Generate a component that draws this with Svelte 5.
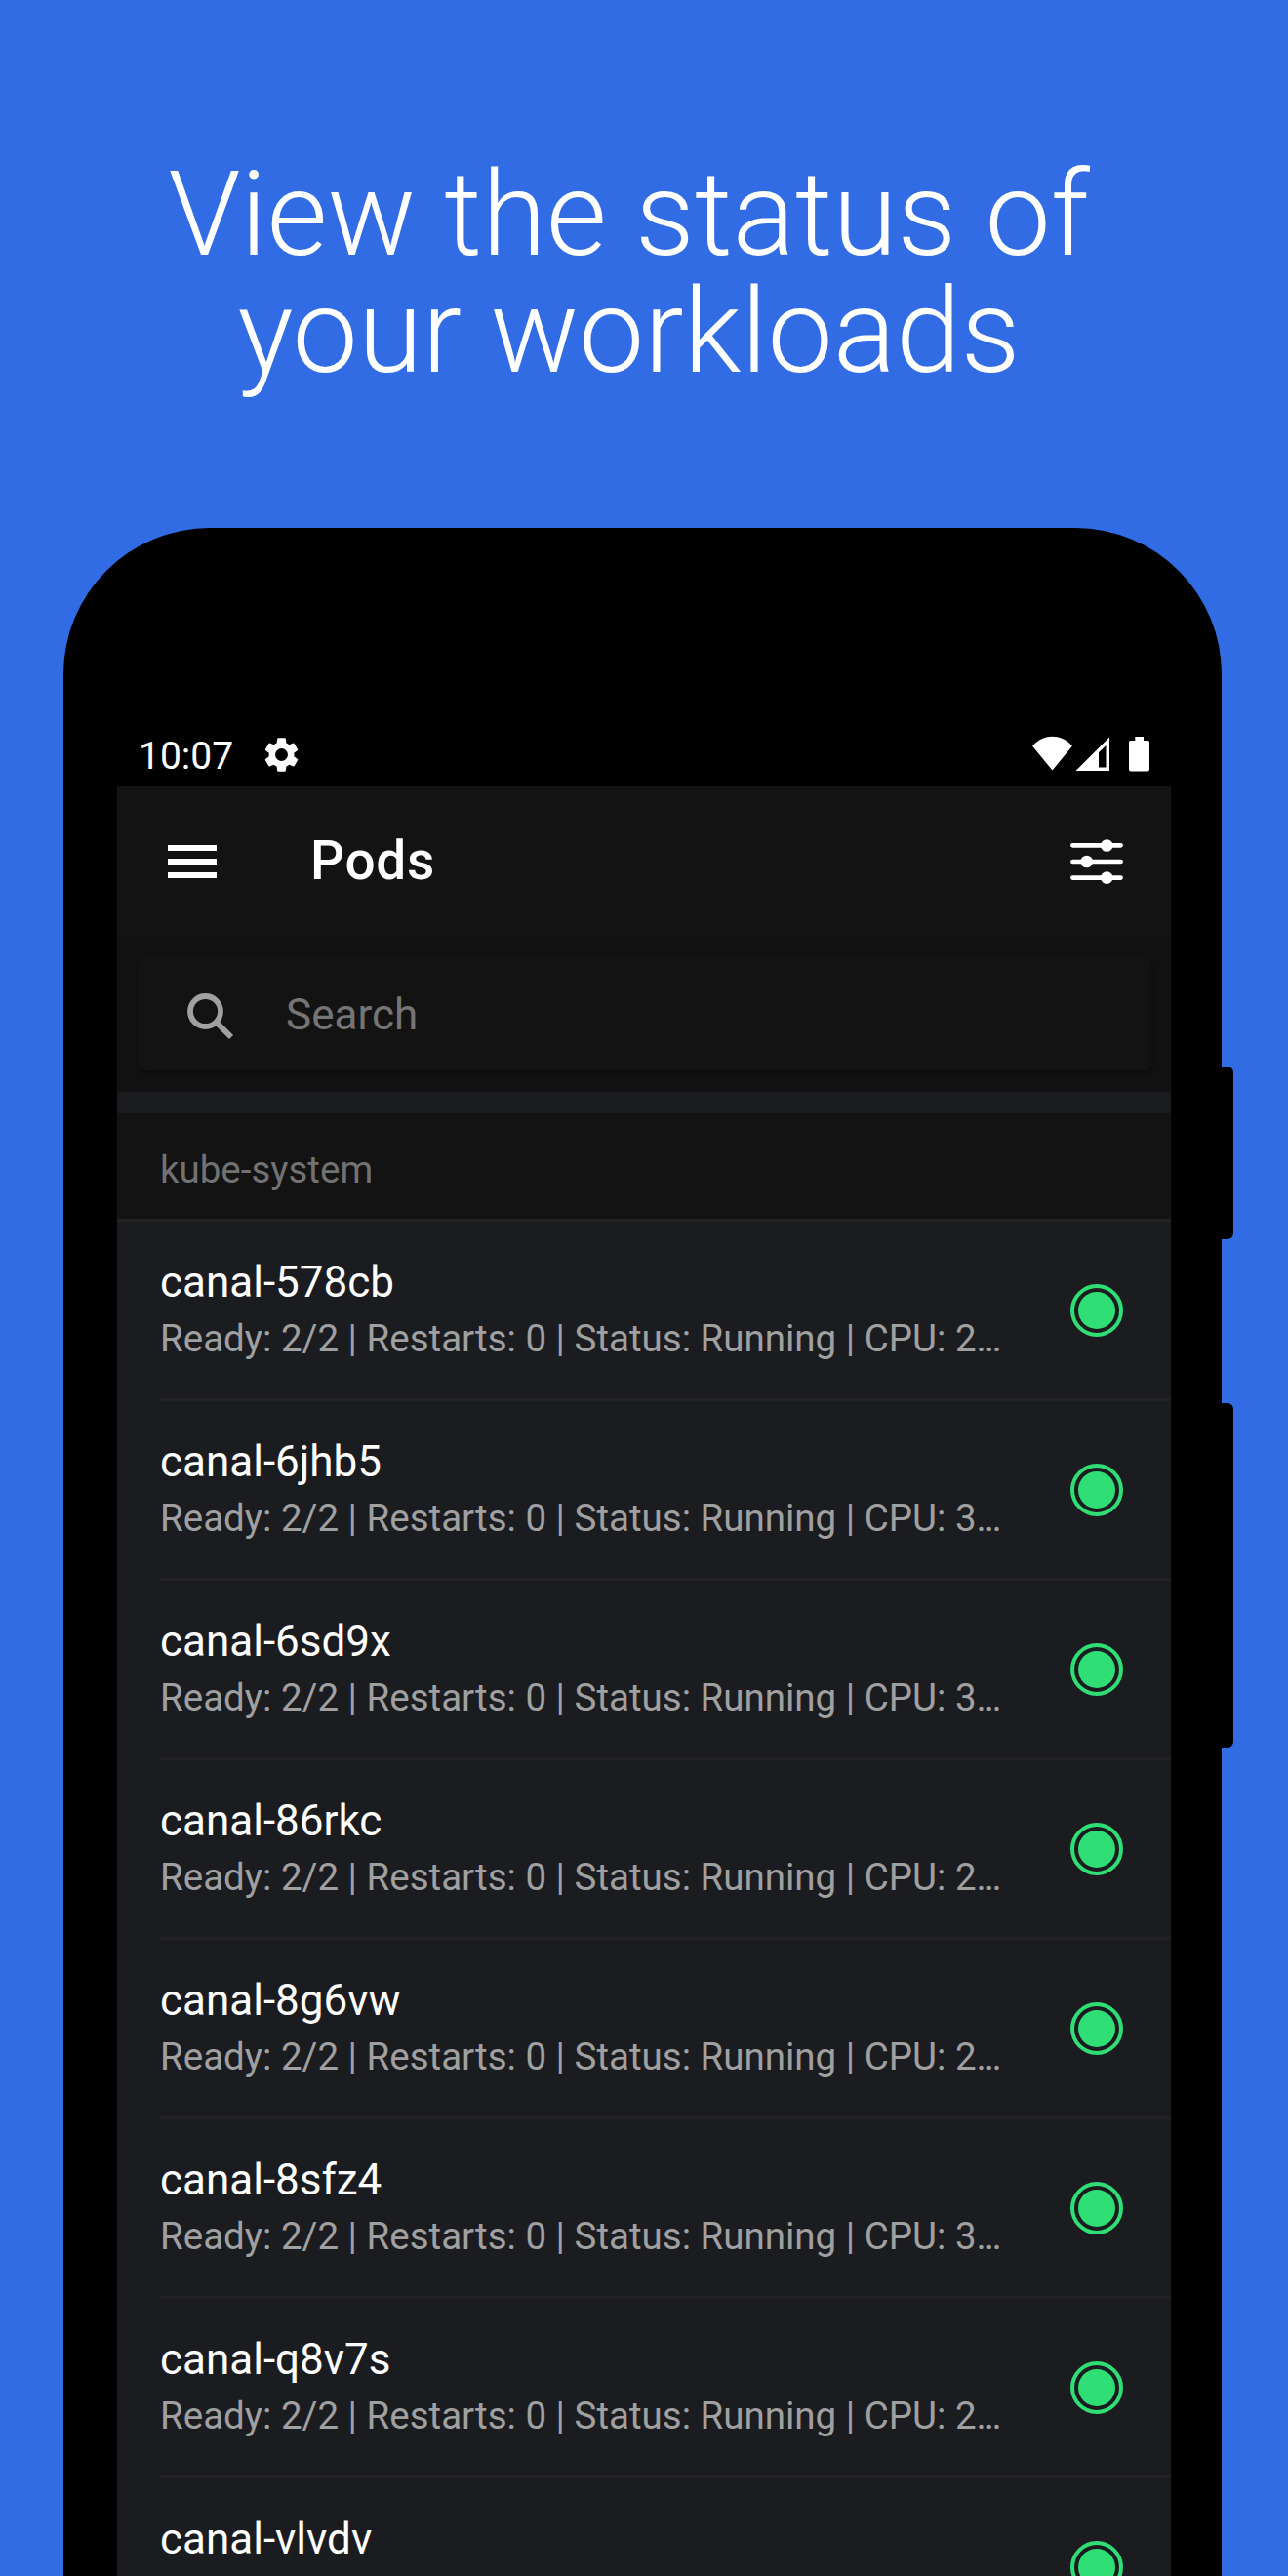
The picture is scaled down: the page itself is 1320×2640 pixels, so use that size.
<script>
  const pods = [
    { name: 'canal-578cb', cpu: 2 },
    { name: 'canal-6jhb5', cpu: 3 },
    { name: 'canal-6sd9x', cpu: 3 },
    { name: 'canal-86rkc', cpu: 2 },
    { name: 'canal-8g6vw', cpu: 2 },
    { name: 'canal-8sfz4', cpu: 3 },
    { name: 'canal-q8v7s', cpu: 2 },
    { name: 'canal-vlvdv', cpu: 2 }
  ];
</script>

<div class="page">
  <h1>View the status of<br />your workloads</h1>

  <div class="phone">
    <span class="key power"></span>
    <span class="key volume"></span>

    <div class="status">
      <span class="time">10:07</span>
      <svg class="gear" viewBox="0 0 24 24" width="43" height="43">
        <path fill="#fff" d="M19.14 12.94c.04-.3.06-.61.06-.94 0-.32-.02-.64-.07-.94l2.03-1.58a.49.49 0 0 0 .12-.61l-1.92-3.32a.49.49 0 0 0-.59-.22l-2.39.96a7 7 0 0 0-1.62-.94l-.36-2.54a.48.48 0 0 0-.48-.41h-3.84a.47.47 0 0 0-.47.41l-.36 2.54c-.59.24-1.13.57-1.62.94l-2.39-.96a.48.48 0 0 0-.59.22L2.74 8.87a.47.47 0 0 0 .12.61l2.03 1.58c-.05.3-.09.63-.09.94s.02.64.07.94l-2.03 1.58a.49.49 0 0 0-.12.61l1.92 3.32c.12.22.37.29.59.22l2.39-.96c.5.38 1.03.7 1.62.94l.36 2.54c.05.24.24.41.48.41h3.84c.24 0 .44-.17.47-.41l.36-2.54a7 7 0 0 0 1.62-.94l2.39.96c.22.08.47 0 .59-.22l1.92-3.32a.47.47 0 0 0-.12-.61zM12 15.6a3.6 3.6 0 1 1 0-7.2 3.6 3.6 0 0 1 0 7.2z" />
      </svg>
      <svg class="signals" viewBox="0 0 122 38" width="122" height="38">
        <g fill="#fff">
          <path d="M0 10.5C12-2.5 29-2.5 41 10.5L20.500 35.500z" />
          <path fill-rule="evenodd" d="M44.500 36 79 1.500V36zM68 17v15.500h7.500V10z" />
          <path d="M105.300 1h8.700v4h4.500q1.500 0 1.500 1.500v28q0 2-2 2h-17q-2 0-2-2v-28q0-1.500 1.500-1.500h4.800z" />
        </g>
      </svg>
    </div>

    <div class="screen">
      <header>
        <svg viewBox="0 0 50 34" width="50" height="34">
          <path fill="#fff" d="M0 0h50v6H0zM0 14h50v6H0zM0 28h50v6H0z" />
        </svg>
        <span class="title">Pods</span>
        <svg viewBox="0 0 54 46" width="54" height="46">
          <path d="M2.400 6.300h49.200M2.400 23h49.200M2.400 39.600h49.200" stroke="#fff" stroke-width="4.700" stroke-linecap="round" />
          <g fill="#fff">
            <circle cx="37.300" cy="6.500" r="6.300" />
            <circle cx="16.700" cy="23" r="6.300" />
            <circle cx="37.300" cy="39.600" r="6.300" />
          </g>
        </svg>
      </header>

      <div class="search-bar">
        <div class="search">
          <svg viewBox="0 0 48 48" width="48" height="48">
            <circle cx="18.500" cy="18.500" r="15.500" fill="none" stroke="#a0a0a0" stroke-width="5.800" />
            <path d="M29 29 45 45" stroke="#a0a0a0" stroke-width="6" />
          </svg>
          <span>Search</span>
        </div>
      </div>

      <div class="group">kube-system</div>

      {#each pods as pod}
        <div class="row">
          <div class="text">
            <div class="name">{pod.name}</div>
            <div class="detail">Ready: 2/2 | Restarts: 0 | Status: Running | CPU: {pod.cpu}…</div>
          </div>
          <svg viewBox="0 0 54 54" width="54" height="54">
            <circle cx="27" cy="27" r="25" fill="none" stroke="#2fdf75" stroke-width="4" />
            <circle cx="27" cy="27" r="19" fill="#2fdf75" />
          </svg>
        </div>
      {/each}
    </div>
  </div>
</div>

<style>
  :global(body) {
    margin: 0;
    background: #326ce5;
  }
  .page {
    width: 1320px;
    height: 2640px;
    overflow: hidden;
    box-sizing: border-box;
    padding-top: 160px;
    background: #326ce5;
    font-family: Roboto, sans-serif;
    color: #fff;
  }
  h1 {
    margin: 0 0 141px;
    width: 1289px;
    font-weight: 300;
    font-size: 120px;
    line-height: 120px;
    text-align: center;
  }
  .phone {
    position: relative;
    box-sizing: border-box;
    width: 1187px;
    height: 2300px;
    margin-left: 65px;
    padding: 205px 52px 0 55px;
    border-radius: 150px 150px 0 0;
    background: #000;
  }
  .key {
    position: absolute;
    left: 100%;
    width: 12px;
    border-radius: 0 6px 6px 0;
    background: #000;
  }
  .power {
    top: 552px;
    height: 177px;
  }
  .volume {
    top: 897px;
    height: 353px;
  }
  .status {
    display: flex;
    height: 60px;
    padding: 0 20px 0 22px;
  }
  .time {
    width: 125px;
    font-size: 39px;
    line-height: 58px;
  }
  .gear {
    margin: 6px auto 0 0;
  }
  .signals {
    margin-top: 8px;
  }
  .screen {
    height: 2000px;
    background: #1b1c20;
  }
  header {
    display: flex;
    align-items: center;
    box-sizing: border-box;
    height: 156px;
    padding: 0 49px 2px 52px;
    background: #131313;
  }
  .title {
    flex: 1;
    margin-left: 96px;
    padding-bottom: 2px;
    font-size: 55px;
    font-weight: 500;
    line-height: 60px;
    letter-spacing: 0.0125em;
  }
  .search-bar {
    box-sizing: border-box;
    height: 157px;
    padding: 18px 20px 22px 22px;
    background: #121212;
    box-shadow: 0 -1px 2px #0f0f0f;
  }
  .search {
    display: flex;
    align-items: center;
    gap: 53px;
    height: 117px;
    padding: 6px 49px 0 50px;
    box-sizing: border-box;
    border-radius: 6px;
    background: #131313;
    box-shadow: 0 3px 6px rgba(0, 0, 0, 0.35);
    color: #757575;
    font-size: 44px;
  }
  .search span {
    padding-bottom: 3px;
  }
  .group {
    box-sizing: border-box;
    height: 111px;
    margin-top: 22px;
    padding: 4px 44px 0;
    border-bottom: 3px solid #232323;
    background: #131313;
    color: #727272;
    font-size: 38.5px;
    line-height: 107px;
  }
  .row {
    display: flex;
    align-items: center;
    justify-content: space-between;
    height: 181px;
    margin-left: 44px;
    padding-right: 49px;
    border-bottom: 3px solid #232323;
  }
  .text {
    padding-bottom: 3px;
    white-space: nowrap;
  }
  .name {
    font-size: 44px;
    line-height: 62px;
  }
  .detail {
    color: #a0a0a0;
    font-size: 38.5px;
    line-height: 54px;
  }
</style>
